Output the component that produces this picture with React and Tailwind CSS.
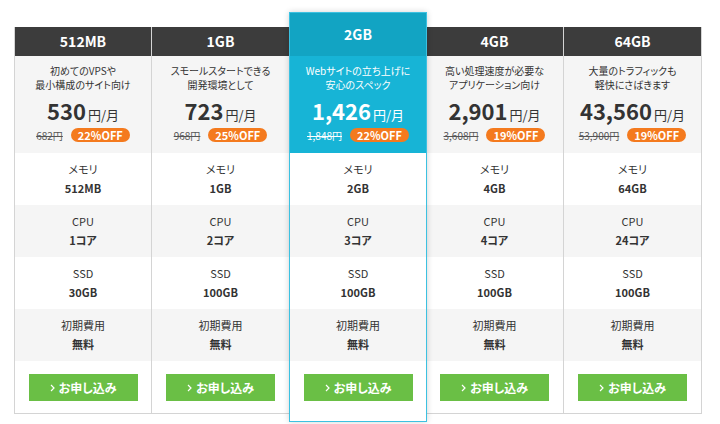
import React from "react";

const plans = [
  {
    name: "512MB",
    desc: ["初めてのVPSや", "最小構成のサイト向け"],
    price: "530",
    orig: "682円",
    off: "22%OFF",
    mem: "512MB",
    cpu: "1コア",
    ssd: "30GB",
  },
  {
    name: "1GB",
    desc: ["スモールスタートできる", "開発環境として"],
    price: "723",
    orig: "968円",
    off: "25%OFF",
    mem: "1GB",
    cpu: "2コア",
    ssd: "100GB",
  },
  {
    name: "2GB",
    desc: ["Webサイトの立ち上げに", "安心のスペック"],
    price: "1,426",
    orig: "1,848円",
    off: "22%OFF",
    mem: "2GB",
    cpu: "3コア",
    ssd: "100GB",
    highlight: true,
  },
  {
    name: "4GB",
    desc: ["高い処理速度が必要な", "アプリケーション向け"],
    price: "2,901",
    orig: "3,608円",
    off: "19%OFF",
    mem: "4GB",
    cpu: "4コア",
    ssd: "100GB",
  },
  {
    name: "64GB",
    desc: ["大量のトラフィックも", "軽快にさばきます"],
    price: "43,560",
    orig: "53,900円",
    off: "19%OFF",
    mem: "64GB",
    cpu: "24コア",
    ssd: "100GB",
  },
];

const SpecRow = ({ label, value, gray }) => (
  <div
    className={`h-[52px] flex flex-col items-center justify-center gap-[4px] text-[11px] leading-[15px] text-[#333] ${
      gray ? "bg-[#f5f5f5]" : "bg-white"
    }`}
  >
    <div>{label}</div>
    <div className="font-bold">{value}</div>
  </div>
);

const PlanColumn = ({ plan, index }) => {
  const hl = plan.highlight;

  return (
    <div
      className={
        hl
          ? "w-[138px] flex flex-col border border-[#3cc1e1] bg-white relative z-10 shadow-[0_0_6px_rgba(0,0,0,0.18)] -mx-px"
          : `w-[138px] mt-[15px] flex flex-col bg-white border-b border-r border-[#d4d4d4] ${
              index === 0 ? "border-l" : ""
            }`
      }
    >
      <div
        className={`flex items-center justify-center text-white font-bold text-[14px] ${
          hl ? "h-[43px] bg-[#12a4c3]" : "h-[29px] bg-[#3c3c3c]"
        }`}
      >
        {plan.name}
      </div>

      <div
        className={`h-[97px] flex flex-col items-center pt-[8px] ${
          hl ? "bg-[#17b4d6] text-white" : "bg-[#f5f5f5] text-[#333]"
        }`}
      >
        <div className="text-[10px] leading-[14px] text-center">
          <div>{plan.desc[0]}</div>
          <div>{plan.desc[1]}</div>
        </div>
        <div className="flex items-baseline mt-[4px]">
          <span className="text-[22px] font-bold leading-[28px]">
            {plan.price}
          </span>
          <span className="text-[13px] ml-[2px]">円/月</span>
        </div>
        <div className="flex items-center gap-[8px] mt-[3px]">
          <span
            className={`text-[10px] line-through ${
              hl ? "text-white" : "text-[#555]"
            }`}
          >
            {plan.orig}
          </span>
          <span className="h-[14px] w-[59px] rounded-full bg-[#f47a1e] text-white text-[11px] font-bold flex items-center justify-center leading-none">
            {plan.off}
          </span>
        </div>
      </div>

      <SpecRow label="メモリ" value={plan.mem} />
      <SpecRow label="CPU" value={plan.cpu} gray />
      <SpecRow label="SSD" value={plan.ssd} />
      <SpecRow label="初期費用" value="無料" gray />

      <div
        className={`flex justify-center bg-white pt-[13px] ${
          hl ? "h-[60px]" : "h-[52px]"
        }`}
      >
        <button className="w-[109px] h-[27px] bg-[#6abf45] text-white text-[12px] font-bold flex items-center justify-center gap-[4px]">
          <svg width="5" height="8" viewBox="0 0 5 8" fill="none">
            <path d="M1 1l3 3-3 3" stroke="white" strokeWidth="1.2" />
          </svg>
          お申し込み
        </button>
      </div>
    </div>
  );
};

const App = () => {
  return (
    <div
      className="w-[720px] h-[424px] bg-white overflow-hidden pt-[12px] pl-[14px] [font-feature-settings:'palt']"
      style={{ fontFamily: '"Noto Sans CJK JP", "Noto Sans", sans-serif' }}
    >
      <div className="flex items-start">
        {plans.map((plan, i) => (
          <PlanColumn key={plan.name} plan={plan} index={i} />
        ))}
      </div>
    </div>
  );
};

export default App;
